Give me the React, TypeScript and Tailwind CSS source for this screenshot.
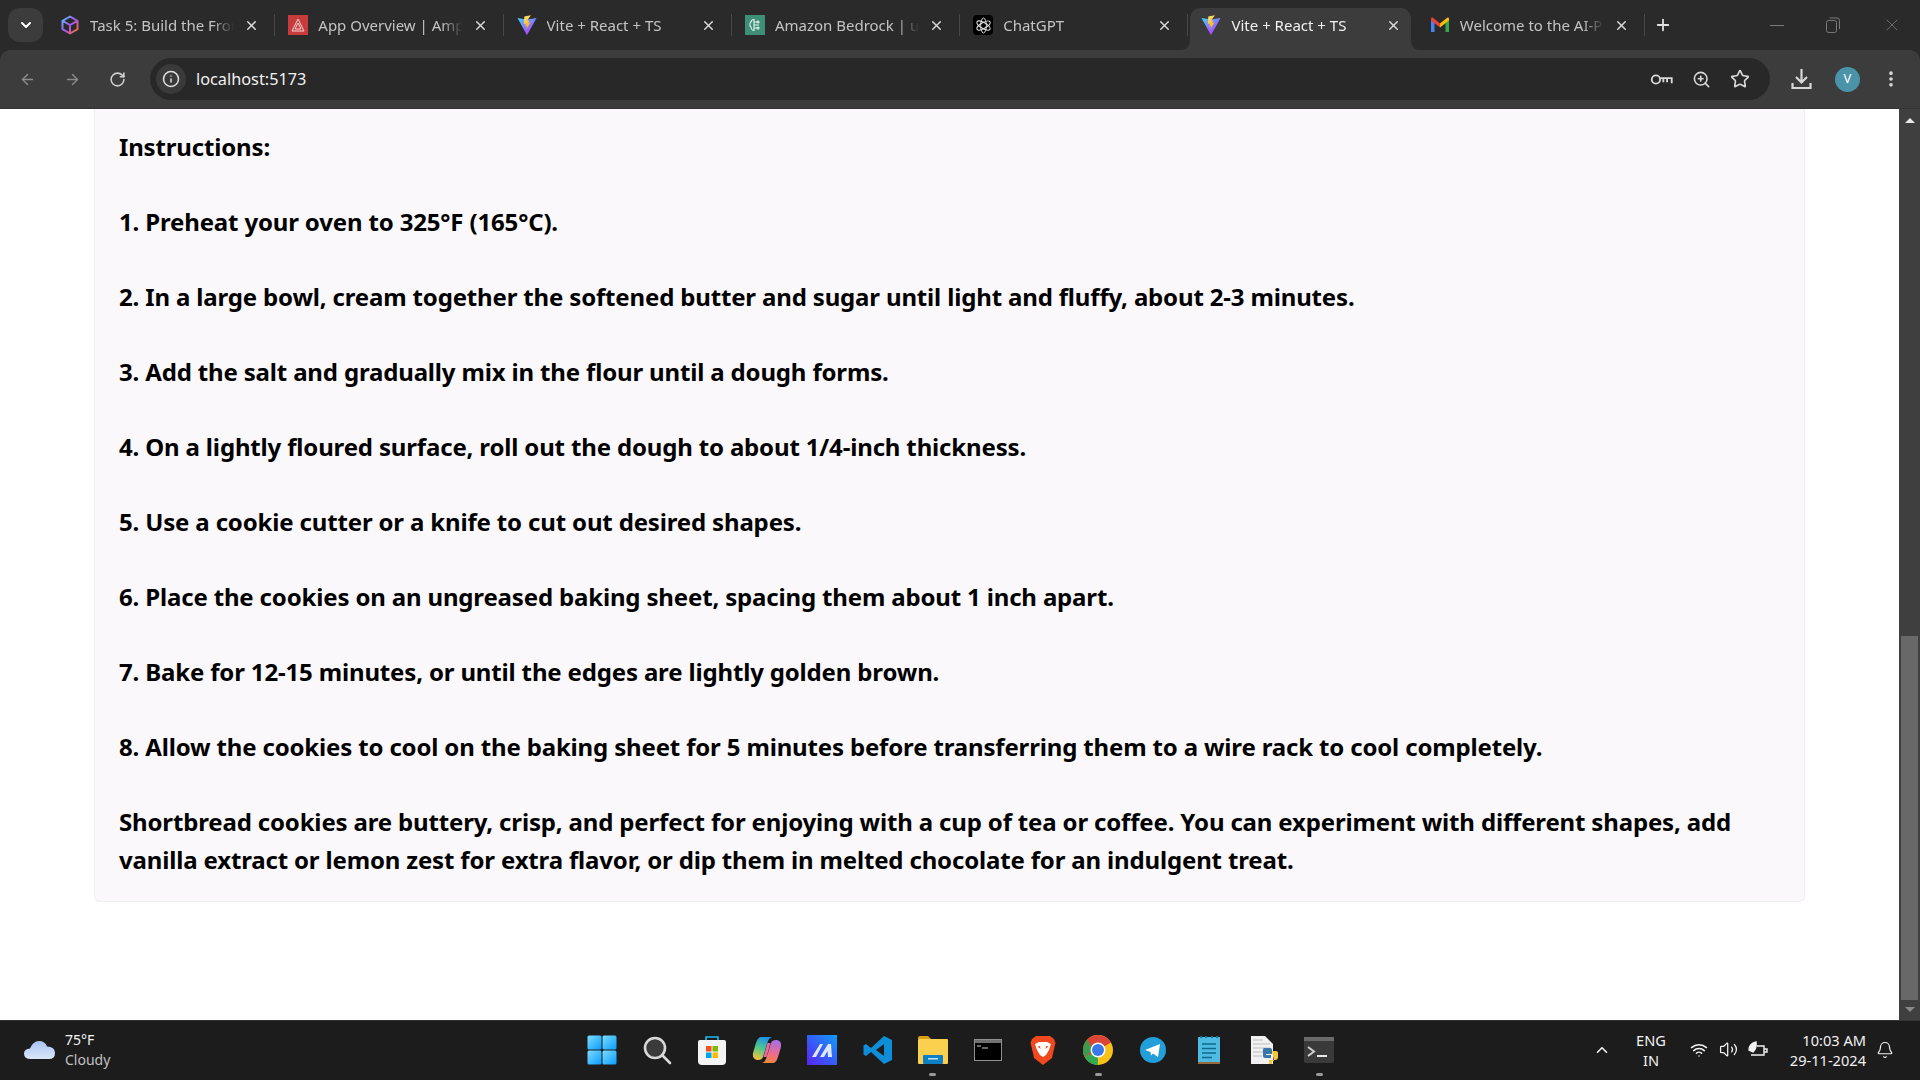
import React from 'react';
import { ArrowLeft, ArrowRight, RotateCw, Info, ZoomIn, Star, EllipsisVertical, X, Plus, ChevronDown, ChevronUp, Bell, Wifi, Volume2 } from 'lucide-react';

const ViteIcon = () => (
  <svg width="20" height="20" viewBox="0 0 20 20">
    <defs>
      <linearGradient id="vite-a" x1="0" y1="0" x2="0.7" y2="1">
        <stop offset="0" stopColor="#41d1ff" />
        <stop offset="1" stopColor="#bd34fe" />
      </linearGradient>
      <linearGradient id="vite-b" x1="0" y1="0" x2="0.4" y2="1">
        <stop offset="0" stopColor="#ffea83" />
        <stop offset="1" stopColor="#ffa800" />
      </linearGradient>
    </defs>
    <path d="M0.5 3 L10 4.6 L19.5 3 L10.4 19.4 Q10 20 9.6 19.4 Z" fill="url(#vite-a)" />
    <path d="M13.9 0.3 L7.3 1.6 L6.9 9 L8.9 8.6 L8.4 11.3 L10 11 L9.5 14.6 L13.4 7.3 L11.3 7.7 L12 5.2 L10.2 5.4 Z" fill="url(#vite-b)" />
  </svg>
);

const CubeIcon = () => (
  <svg width="20" height="20" viewBox="0 0 20 20" fill="none" strokeWidth="2" strokeLinejoin="round">
    <defs>
      <linearGradient id="cube" x1="0" y1="0" x2="1" y2="1">
        <stop offset="0" stopColor="#4fc3f7" />
        <stop offset="0.5" stopColor="#a855f7" />
        <stop offset="1" stopColor="#f97316" />
      </linearGradient>
    </defs>
    <path d="M10 1.5 L17.5 5.8 V14.2 L10 18.5 L2.5 14.2 V5.8 Z M2.5 5.8 L10 10 L17.5 5.8 M10 10 V18.5" stroke="url(#cube)" />
  </svg>
);

const AmplifyIcon = () => (
  <div className="w-5 h-5 bg-[#c73b3b] flex items-center justify-center">
    <svg width="14" height="14" viewBox="0 0 14 14" fill="none" stroke="#f6d5d5" strokeWidth="1">
      <path d="M7 1 L13 13 H1 Z M7 5 L10 11 H4 Z" />
    </svg>
  </div>
);

const BedrockIcon = () => (
  <div className="w-5 h-5 bg-[#3f8f78] flex items-center justify-center">
    <svg width="14" height="14" viewBox="0 0 14 14" fill="none" stroke="#e5f3ee" strokeWidth="1.1">
      <path d="M6 1.5 C3.5 1.5 3 3.5 3 4 C1.5 5 1.5 8 3 9 C3 11 4.5 12.5 6 12.5 Z M6 4 H9 M6 7 H11 M6 10 H9" />
      <circle cx="10" cy="4" r="1" />
      <circle cx="10" cy="10" r="1" />
    </svg>
  </div>
);

const ChatGptIcon = () => (
  <div className="w-5 h-5 rounded bg-black flex items-center justify-center">
    <svg width="17" height="17" viewBox="0 0 16 16" fill="none" stroke="#e8e8e8" strokeWidth="0.9">
      <ellipse cx="8" cy="8" rx="2.7" ry="7" />
      <ellipse cx="8" cy="8" rx="2.7" ry="7" transform="rotate(60 8 8)" />
      <ellipse cx="8" cy="8" rx="2.7" ry="7" transform="rotate(120 8 8)" />
    </svg>
  </div>
);

const GmailIcon = () => (
  <svg width="20" height="20" viewBox="0 0 20 20">
    <path d="M1 4.5 V17 H4.5 V8 Z" fill="#4285f4" />
    <path d="M19 4.5 V17 H15.5 V8 Z" fill="#34a853" />
    <path d="M1 3.5 Q1 2.2 2.5 2.5 L10 8.5 V12.5 L1 5.5 Z" fill="#ea4335" />
    <path d="M19 3.5 Q19 2.2 17.5 2.5 L10 8.5 V12.5 L19 5.5 Z" fill="#fbbc04" />
  </svg>
);

const tabs = [
  { title: 'Task 5: Build the Frontend', icon: <CubeIcon /> },
  { title: 'App Overview | Amplify', icon: <AmplifyIcon /> },
  { title: 'Vite + React + TS', icon: <ViteIcon /> },
  { title: 'Amazon Bedrock | us-east', icon: <BedrockIcon /> },
  { title: 'ChatGPT', icon: <ChatGptIcon /> },
  { title: 'Vite + React + TS', icon: <ViteIcon />, active: true },
  { title: 'Welcome to the AI-Powered', icon: <GmailIcon /> },
];

const steps = [
  'Instructions:',
  '1. Preheat your oven to 325°F (165°C).',
  '2. In a large bowl, cream together the softened butter and sugar until light and fluffy, about 2-3 minutes.',
  '3. Add the salt and gradually mix in the flour until a dough forms.',
  '4. On a lightly floured surface, roll out the dough to about 1/4-inch thickness.',
  '5. Use a cookie cutter or a knife to cut out desired shapes.',
  '6. Place the cookies on an ungreased baking sheet, spacing them about 1 inch apart.',
  '7. Bake for 12-15 minutes, or until the edges are lightly golden brown.',
  '8. Allow the cookies to cool on the baking sheet for 5 minutes before transferring them to a wire rack to cool completely.',
  'Shortbread cookies are buttery, crisp, and perfect for enjoying with a cup of tea or coffee. You can experiment with different shapes, add vanilla extract or lemon zest for extra flavor, or dip them in melted chocolate for an indulgent treat.',
];

function Tab({ title, icon, active }: { title: string; icon: React.ReactNode; active?: boolean }) {
  return (
    <div className={`relative w-[228.3px] h-[42px] shrink-0 flex items-center pb-[8px] pl-[13px] pr-[10px] gap-[10px] ${active ? 'text-[#f0f0f0]' : 'text-[#c4c4c4]'}`}>
      {active && (
        <div className="absolute top-0 bottom-0 left-[2px] right-[6px] bg-[#3c3c3c] rounded-t-[10px]">
          <svg width="10" height="10" viewBox="0 0 10 10" className="absolute bottom-0 left-[-10px]">
            <path d="M10 0 V10 H0 Q10 10 10 0 Z" fill="#3c3c3c" />
          </svg>
          <svg width="10" height="10" viewBox="0 0 10 10" className="absolute bottom-0 right-[-10px]">
            <path d="M0 0 V10 H10 Q0 10 0 0 Z" fill="#3c3c3c" />
          </svg>
        </div>
      )}
      <div className="relative w-5 h-5 shrink-0">{icon}</div>
      <span className="relative flex-1 whitespace-nowrap overflow-hidden [mask-image:linear-gradient(to_right,black_85%,transparent)] text-[15px] leading-5">{title}</span>
      <X size={15} strokeWidth={2.4} className="relative shrink-0 text-[#d8d8d8]" />
      <div className={`w-px h-[22px] ml-[5px] mr-[-10px] ${active ? '' : 'bg-[#484848]'}`} />
    </div>
  );
}

function TabStrip() {
  return (
    <div className="h-[50px] bg-[#2a2a2a] flex items-end shrink-0">
      <div className="w-[47px] h-full flex items-center justify-center shrink-0">
        <div className="w-[35px] h-[34px] rounded-[12px] bg-[#3c3c3c] flex items-center justify-center ml-[4px]">
          <ChevronDown size={16} strokeWidth={3} className="text-white" />
        </div>
      </div>
      <div className="flex items-end">
        {tabs.map((t, i) => (
          <Tab key={i} title={t.title} icon={t.icon} active={t.active} />
        ))}
      </div>
      <div className="h-full flex items-center ml-[9px]">
        <Plus size={18} strokeWidth={2.4} className="text-[#e2e2e2]" />
      </div>
      <div className="flex-1" />
      <div className="h-full flex items-center text-[#7a7a7a] pr-[18px] gap-[42px]">
        <div className="w-[14px] h-px bg-[#7a7a7a]" />
        <svg width="14" height="16" viewBox="0 0 14 16" fill="none" stroke="#7a7a7a">
          <rect x="0.5" y="3.5" width="10" height="12" rx="2" />
          <path d="M3.5 1 H11 Q13.5 1 13.5 3.5 V12" />
        </svg>
        <X size={20} strokeWidth={1} />
      </div>
    </div>
  );
}

function Toolbar() {
  return (
    <div className="bg-[#2a2a2a] shrink-0">
      <div className="h-[59px] bg-[#3c3c3c] flex items-center border-b border-[#333] rounded-t-[10px]">
        <div className="w-[150px] flex items-center pl-[19px] gap-[28px] text-[#8a8a8a] shrink-0">
          <ArrowLeft size={17} strokeWidth={2} />
          <ArrowRight size={17} strokeWidth={2} />
          <RotateCw size={17} strokeWidth={2.2} className="text-[#d0d0d0]" />
        </div>
        <div className="flex-1 h-[42px] rounded-full bg-[#282828] flex items-center pl-[6px] pr-[20px]">
          <div className="w-[30px] h-[30px] rounded-full bg-[#3a3a3a] flex items-center justify-center">
            <Info size={18} strokeWidth={2} className="text-[#e0e0e0]" />
          </div>
          <span className="ml-[10px] text-[16.3px] text-[#f0f0f0]">localhost:5173</span>
          <div className="flex-1" />
          <div className="flex items-center gap-[19px] text-[#d8d8d8]">
            <svg width="23" height="13" viewBox="0 0 24 14" fill="none" stroke="currentColor" strokeWidth="2">
              <circle cx="6" cy="7" r="4.5" />
              <path d="M10.5 5.5 H23 V11 M18 5.5 V10 M14 5.5 V10" />
            </svg>
            <ZoomIn size={19} strokeWidth={2} />
            <Star size={20} strokeWidth={2} />
          </div>
        </div>
        <div className="w-[150px] flex items-center pl-[21px] shrink-0 text-[#d8d8d8]">
          <svg width="21" height="22" viewBox="0 0 21 22" fill="none" stroke="currentColor" strokeWidth="2.2">
            <path d="M10.5 1 V14 M5 9 L10.5 14.5 L16 9 M1.5 15 V20 H19.5 V15" />
          </svg>
          <div className="w-[25px] h-[25px] rounded-full bg-[#4b93a8] text-white text-[13px] flex items-center justify-center ml-[23px]">V</div>
          <EllipsisVertical size={20} strokeWidth={2.4} className="ml-[21px]" />
        </div>
      </div>
    </div>
  );
}

function Scrollbar() {
  return (
    <div className="w-[21px] shrink-0 bg-[#3f3f3f] flex flex-col items-center pt-[9px]">
      <div className="w-0 h-0 border-x-[5px] border-x-transparent border-b-[5px] border-b-[#e8e8e8]" />
      <div className="flex-1" />
      <div className="w-[17px] h-[364px] bg-[#686868]" />
      <div className="w-0 h-0 border-x-[5px] border-x-transparent border-t-[5px] border-t-[#8a8a8a] mt-[7px] mb-[8px]" />
    </div>
  );
}

const taskIcons: React.ReactNode[] = [
  <svg width="30" height="30" viewBox="0 0 30 30">
    <defs>
      <linearGradient id="win" x1="0" y1="0" x2="1" y2="1">
        <stop offset="0" stopColor="#7cdcff" />
        <stop offset="1" stopColor="#0a9bff" />
      </linearGradient>
    </defs>
    <rect x="0.5" y="0.5" width="14" height="14" rx="1.5" fill="url(#win)" />
    <rect x="15.5" y="0.5" width="14" height="14" rx="1.5" fill="url(#win)" />
    <rect x="0.5" y="15.5" width="14" height="14" rx="1.5" fill="url(#win)" />
    <rect x="15.5" y="15.5" width="14" height="14" rx="1.5" fill="url(#win)" />
  </svg>,
  <svg width="30" height="30" viewBox="0 0 30 30" fill="#3a3a3a" stroke="#d8d8d8" strokeWidth="2.6" strokeLinecap="round">
    <circle cx="13" cy="13" r="10" />
    <path d="M20.5 20.5 L28 28" />
  </svg>,
  <svg width="30" height="30" viewBox="0 0 30 30">
    <path d="M9 6 V2 H21 V6" fill="none" stroke="#22b8f0" strokeWidth="1.6" />
    <path d="M1 7 Q1 5 3 5 H27 Q29 5 29 7 V26 Q29 30 25 30 H5 Q1 30 1 26 Z" fill="#f4f4f4" />
    <rect x="9" y="11" width="5.5" height="5.5" fill="#f25022" />
    <rect x="15.5" y="11" width="5.5" height="5.5" fill="#7fba00" />
    <rect x="9" y="17.5" width="5.5" height="5.5" fill="#00a4ef" />
    <rect x="15.5" y="17.5" width="5.5" height="5.5" fill="#ffb900" />
  </svg>,
  <svg width="30" height="30" viewBox="0 0 30 30">
    <defs>
      <linearGradient id="cop-a" x1="0.6" y1="0" x2="0.3" y2="1">
        <stop offset="0" stopColor="#1f8fe8" />
        <stop offset="0.5" stopColor="#4fc98a" />
        <stop offset="1" stopColor="#f6c13c" />
      </linearGradient>
      <linearGradient id="cop-b" x1="0.6" y1="0" x2="0.4" y2="1">
        <stop offset="0" stopColor="#a86fe8" />
        <stop offset="0.6" stopColor="#ee6c8a" />
        <stop offset="1" stopColor="#f0893a" />
      </linearGradient>
    </defs>
    <path d="M9 2 H20 Q17 3 16 6 L11 22 Q10 25 6 25 H5 Q0 24 1 18 L4 8 Q6 2 9 2 Z" fill="url(#cop-a)" />
    <path d="M21 28 H10 Q13 27 14 24 L19 8 Q20 5 24 5 H25 Q30 6 29 12 L26 22 Q24 28 21 28 Z" fill="url(#cop-b)" />
    <path d="M15.5 8 H18.5 L14.5 22 H11.5 Z" fill="#e26aa0" />
  </svg>,
  <svg width="30" height="30" viewBox="0 0 30 30">
    <defs>
      <linearGradient id="ma" x1="1" y1="0" x2="0" y2="1">
        <stop offset="0" stopColor="#0e9bff" />
        <stop offset="1" stopColor="#5a22f0" />
      </linearGradient>
    </defs>
    <rect width="30" height="30" fill="url(#ma)" />
    <path d="M5 22 L13 9 H16 L9 22 Z M13 22 L21 9 H24 L25 22 H21 L20.5 16 L17 22 Z" fill="#dfe6ff" />
  </svg>,
  <svg width="30" height="30" viewBox="0 0 30 30">
    <path d="M21 1 L29 5 V25 L21 29 L8 17 L3 21 L0.5 19.5 V10.5 L3 9 L8 13 Z M21 9 L13 15 L21 21 Z" fill="#0e8ed8" fillRule="evenodd" />
  </svg>,
  <svg width="30" height="30" viewBox="0 0 30 30">
    <path d="M0 3 Q0 1 2 1 H10 L13 4 H0 Z" fill="#d99f17" />
    <rect y="4" width="30" height="25" rx="1" fill="#fcd04f" />
    <rect x="5" y="20" width="20" height="9" rx="1" fill="#0f7fc4" />
    <rect x="10" y="23" width="10" height="1.5" fill="#b9e3fa" />
  </svg>,
  <svg width="28" height="22" viewBox="0 0 28 22">
    <rect x="0.5" y="0.5" width="27" height="21" fill="#000" stroke="#8f8f8f" />
    <rect x="1" y="1" width="26" height="3" fill="#707070" />
    <path d="M3 7 H7 M8 9 H14" stroke="#d0d0d0" strokeWidth="1" />
  </svg>,
  <svg width="26" height="30" viewBox="0 0 26 30">
    <path d="M6 1 H20 L24 4 L25.5 8 L24 14 L22 23 L13 30 L4 23 L2 14 L0.5 8 L2 4 Z" fill="#f0491f" />
    <path d="M5 9 L9 7 H17 L21 9 L19 15 L16 20 L13 22 L10 20 L7 15 Z M10 11 L7.5 11.5 L10.5 14 Z M16 11 L18.5 11.5 L15.5 14 Z" fill="#fff" fillRule="evenodd" />
  </svg>,
  <svg width="30" height="30" viewBox="0 0 30 30">
    <circle cx="15" cy="15" r="15" fill="#fbc116" />
    <path d="M15 15 L2 22.5 A15 15 0 0 1 15 0 H15 A15 15 0 0 1 28 7.5 Z" fill="#db4437" />
    <path d="M15 15 L2 22.5 A15 15 0 0 0 15 30 Z" fill="#34a853" />
    <path d="M2 22.5 A15 15 0 0 1 4.4 4.4 L10 15 Z" fill="#3a9b4f" />
    <circle cx="15" cy="15" r="7.5" fill="#fff" />
    <circle cx="15" cy="15" r="6" fill="#3b78e7" />
  </svg>,
  <svg width="26" height="26" viewBox="0 0 26 26">
    <circle cx="13" cy="13" r="13" fill="#229ed9" />
    <path d="M5 13 L20 7 L18 20 L13 16.5 L11 18.5 L10.5 15 Z" fill="#fff" />
  </svg>,
  <svg width="24" height="30" viewBox="0 0 24 30">
    <rect x="1" y="2" width="22" height="25" fill="#4dbbe2" />
    <rect x="1" y="27" width="22" height="2" fill="#9a6a3c" />
    <path d="M5 9 H19 M5 13.5 H19 M5 18 H19 M5 22.5 H15" stroke="#11698f" strokeWidth="1.6" />
    <path d="M4 3 V1 M9 3 V1 M15 3 V1 M20 3 V1" stroke="#17739b" strokeWidth="2" />
  </svg>,
  <svg width="28" height="30" viewBox="0 0 28 30">
    <path d="M1 1 H15 L23 9 V29 H1 Z" fill="#f1f1f1" />
    <path d="M3 5 H13 M3 9 H20 M3 13 H20 M3 17 H14 M3 21 H12" stroke="#bdbdbd" strokeWidth="1" />
    <path d="M14 13 H20 Q22 13 22 15 V19 H16 V20 H21 V23 H15 Q13 23 13 21 V15 Q13 13 14 13 Z" fill="#3a76a8" />
    <path d="M22 16 H26 Q28 16 28 18 V22 Q28 25 25 25 H19 V29 H22 V26 H24" fill="#f6c63f" />
  </svg>,
  <svg width="30" height="26" viewBox="0 0 30 26">
    <rect width="30" height="26" rx="2" fill="#3a3a3a" />
    <rect width="30" height="4" fill="#6a6a6a" />
    <path d="M4 10 L10 14.5 L4 19" fill="none" stroke="#cfcfcf" strokeWidth="2" />
    <path d="M13 19 H23" stroke="#e8e8e8" strokeWidth="2" />
  </svg>,
];

const runningIcons = [6, 9, 13];

function Taskbar() {
  return (
    <div className="h-[60px] bg-[#1c1c1c] border-t border-[#333] flex items-center pb-[2px] shrink-0 text-white font-['Noto_Sans',sans-serif]">
      <div className="w-[574px] shrink-0 flex items-center pl-[24px] gap-[9px]">
        <svg width="32" height="20" viewBox="0 0 32 20">
          <defs>
            <linearGradient id="cloud" x1="0" y1="0" x2="0" y2="1">
              <stop offset="0" stopColor="#a8c4f5" />
              <stop offset="1" stopColor="#dbe6f8" />
            </linearGradient>
          </defs>
          <path d="M7 19 Q0 19 0 13.5 Q0 9 6 8.5 Q9 1 15 1 Q21 1 23 6.5 Q31 6.5 31 13 Q31 19 25 19 Z" fill="url(#cloud)" />
        </svg>
        <div className="text-[14px] leading-5">
          <div className="text-[#f4f4f4]">75°F</div>
          <div className="text-[#c0c0c0]">Cloudy</div>
        </div>
      </div>
      <div className="flex items-center">
        {taskIcons.map((icon, i) => (
          <div key={i} className="relative w-[55.2px] h-[46px] flex items-center justify-center">
            {icon}
            {runningIcons.includes(i) && <div className="absolute bottom-[-3px] w-[7px] h-[3px] rounded-full bg-[#9a9a9a]" />}
          </div>
        ))}
      </div>
      <div className="flex-1" />
      <div className="flex items-center text-[#f2f2f2] pr-[26px]">
        <ChevronUp size={18} strokeWidth={2.2} />
        <div className="text-[14.6px] leading-[20px] text-center ml-[23px] w-[34px]">
          <div>ENG</div>
          <div>IN</div>
        </div>
        <Wifi size={18} strokeWidth={2} className="ml-[22px]" />
        <Volume2 size={19} strokeWidth={1.6} className="ml-[11px]" />
        <svg width="20" height="18" viewBox="0 0 20 18" fill="none" stroke="currentColor" strokeWidth="1.4" className="ml-[10px]">
          <path d="M3 14 H16 V5 H9 M16 8 H19 V11 H16" />
          <path d="M1 9 Q1 3 8 1 Q9 7 5 11 Z" fill="currentColor" />
        </svg>
        <div className="text-[14.6px] leading-[20px] text-right ml-[12px] w-[86px]">
          <div>10:03 AM</div>
          <div>29-11-2024</div>
        </div>
        <Bell size={18} strokeWidth={1.6} className="ml-[10px]" />
      </div>
    </div>
  );
}

export default function App() {
  return (
    <div className="w-full h-screen flex flex-col overflow-hidden bg-white font-['Noto_Sans',sans-serif]">
      <TabStrip />
      <Toolbar />
      <div className="flex-1 flex min-h-0">
        <main className="flex-1 bg-white pl-[94px] pr-[94px]">
          <div className="bg-[#faf8fa] border-x border-b border-[#eeeeee] rounded-b-md pt-[19px] pb-[23px] pl-[24px] pr-[24px]">
            {steps.map((s, i) => (
              <p key={i} className={`text-[24px] leading-[37.5px] font-bold tracking-[-0.16px] text-black ${i < steps.length - 1 ? 'mb-[37.5px]' : ''}`}>
                {s}
              </p>
            ))}
          </div>
        </main>
        <Scrollbar />
      </div>
      <Taskbar />
    </div>
  );
}
